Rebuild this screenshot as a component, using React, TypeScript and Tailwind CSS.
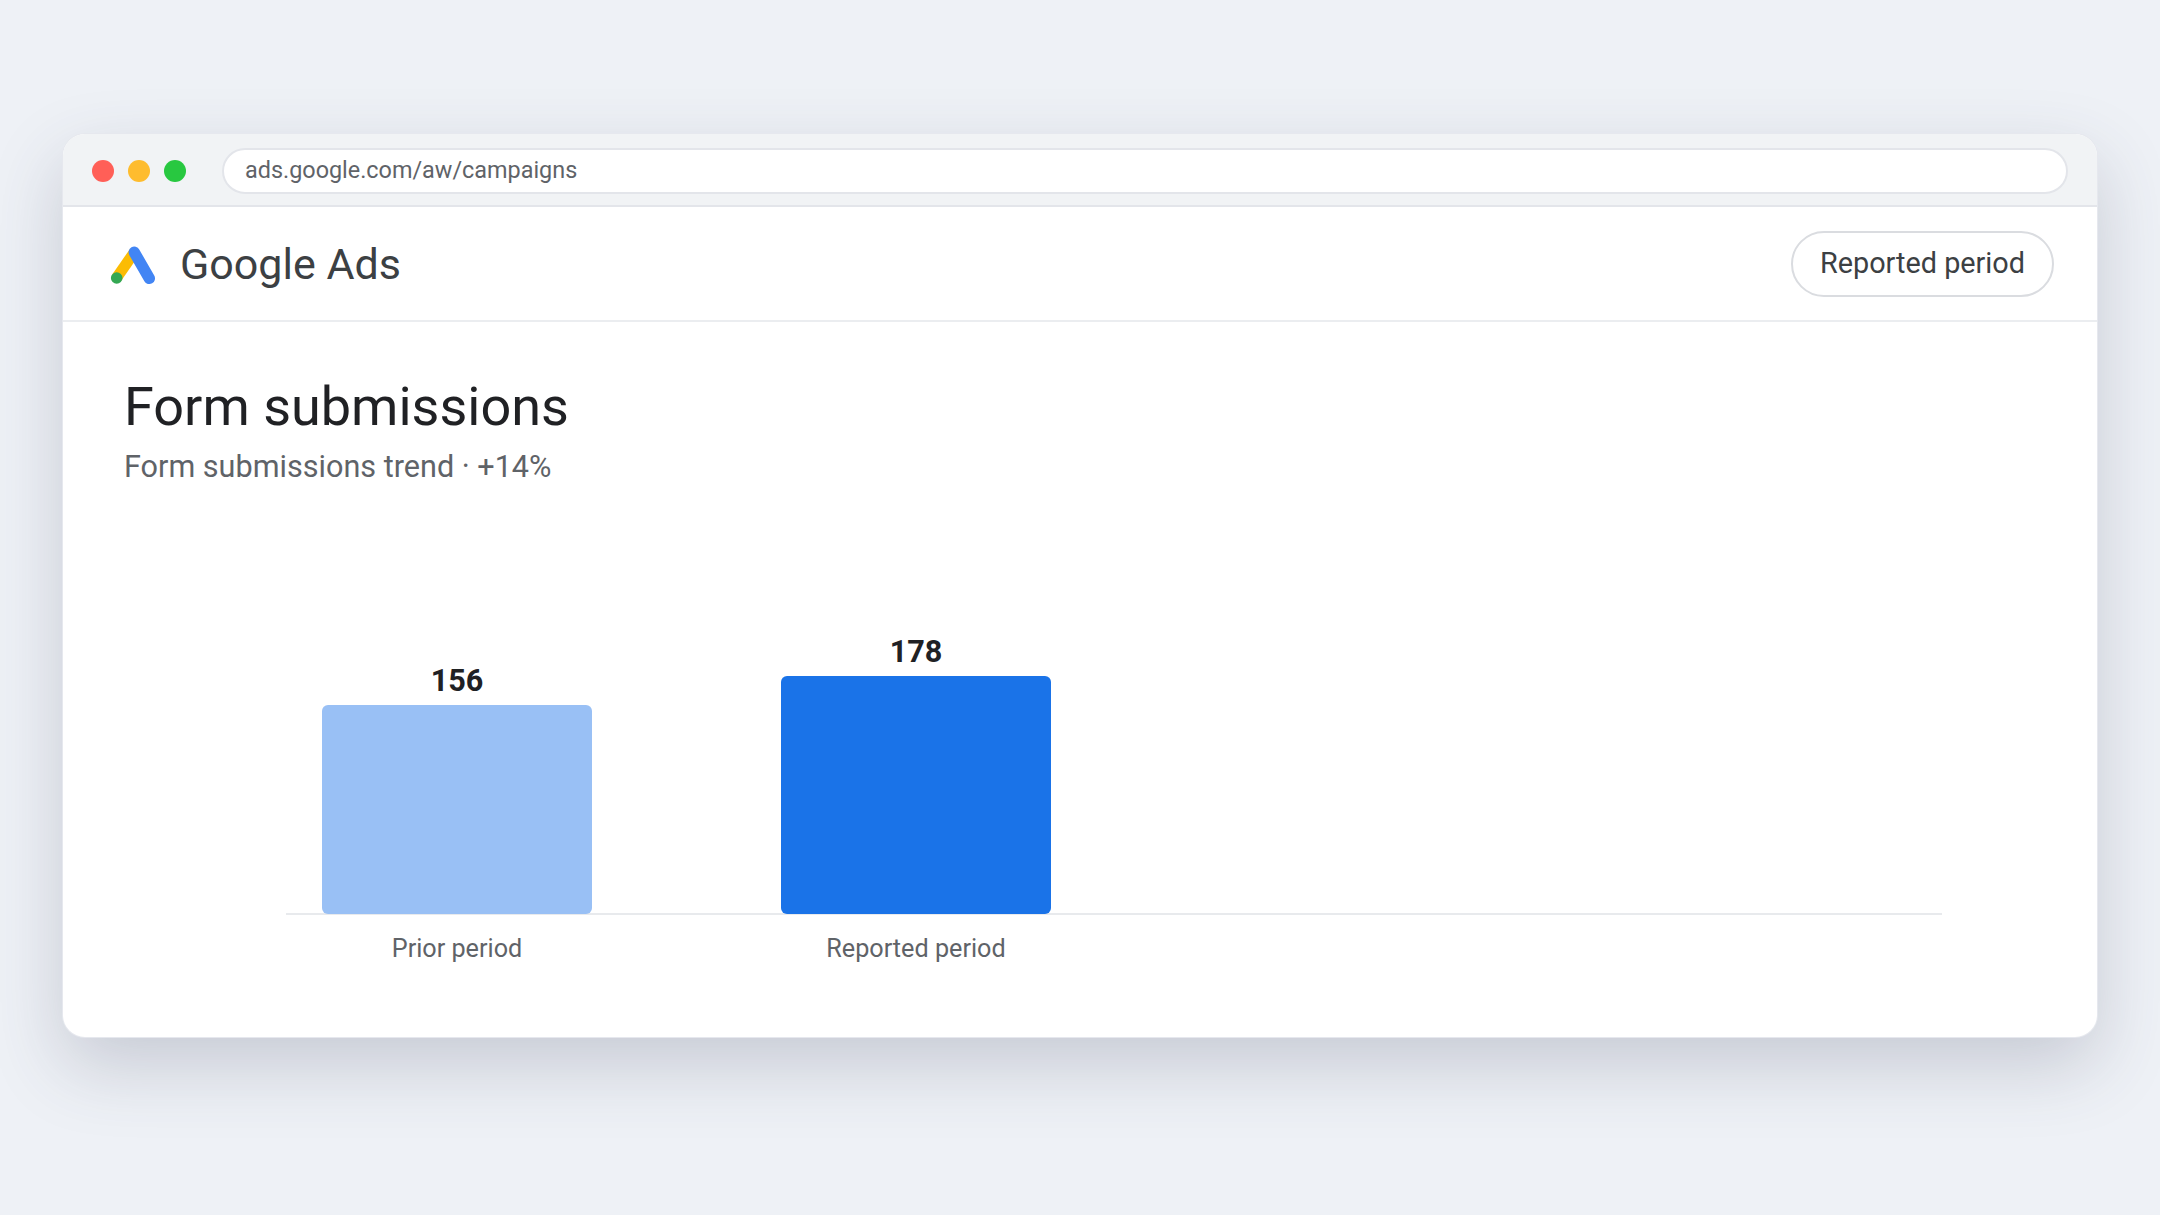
import React from 'react';

const bars = [
  { label: 'Prior period', value: 156, height: 'h-[209px]', color: 'bg-[#99c0f5]' },
  { label: 'Reported period', value: 178, height: 'h-[238px]', color: 'bg-[#1a73e8]' },
];

function AdsLogo() {
  return (
    <svg width="46" height="40" viewBox="0 0 46 40" fill="none">
      <line x1="6.7" y1="32.7" x2="24.3" y2="7.3" stroke="#fbbc04" strokeWidth="11" />
      <line x1="24.3" y1="7.3" x2="39.3" y2="33.4" stroke="#4285f4" strokeWidth="11.4" strokeLinecap="round" />
      <circle cx="6.7" cy="33" r="5.8" fill="#34a853" />
    </svg>
  );
}

export default function App() {
  return (
    <div className="h-screen overflow-hidden bg-[#eef1f6] pt-[134px] font-['Roboto',sans-serif]">
      <div className="mx-auto h-[903px] w-[2034px] overflow-hidden rounded-[22px] bg-white shadow-[0_0_0_1px_#e6e8ee,0_28px_72px_rgba(60,64,90,0.22)]">
        {/* Browser chrome */}
        <div className="flex h-[73px] items-center border-b-2 border-[#e3e5ea] bg-[#f1f3f5] px-[29px] pt-[2px]">
          <div className="flex gap-[14px]">
            <span className="h-[22px] w-[22px] rounded-full bg-[#ff5f57]" />
            <span className="h-[22px] w-[22px] rounded-full bg-[#febc2e]" />
            <span className="h-[22px] w-[22px] rounded-full bg-[#28c840]" />
          </div>
          <div className="ml-[36px] flex h-[46px] flex-1 items-center rounded-full border-2 border-[#e3e5ea] bg-white pl-[21px] text-[23.4px] text-[#5f6368]">
            ads.google.com/aw/campaigns
          </div>
        </div>

        {/* App header */}
        <div className="flex h-[115px] items-center justify-between border-b-2 border-[#ebedf0] pr-[43px] pl-[47px]">
          <div className="mt-[3px] flex items-center gap-[24px]">
            <AdsLogo />
            <span className="-mt-[1px] text-[43px] text-[#3c4043]">Google Ads</span>
          </div>
          <button className="h-[66px] rounded-full border-2 border-[#dadce0] bg-white px-[27px] text-[28.8px] text-[#3c4043]">
            Reported period
          </button>
        </div>

        {/* Content */}
        <div className="pt-[52px] pl-[61px]">
          <h1 className="text-[54px] leading-[66px] text-[#202124]">Form submissions</h1>
          <p className="mt-[8px] text-[30.6px] leading-[38px] text-[#5f6368]">Form submissions trend · +14%</p>

          <div className="mt-[148px] ml-[162px] w-[1656px]">
            <div className="flex items-end gap-[189px] border-b-2 border-[#e8eaed] pl-[36px]">
              {bars.map((bar) => (
                <div key={bar.label} className="-mb-px flex w-[270px] flex-col items-center">
                  <span className="mb-[6px] text-[30.6px] leading-[36px] font-bold text-[#202124]">{bar.value}</span>
                  <div className={`w-full rounded-[6px] ${bar.height} ${bar.color}`} />
                </div>
              ))}
            </div>
            <div className="mt-[18px] flex gap-[189px] pl-[36px]">
              {bars.map((bar) => (
                <span key={bar.label} className="w-[270px] text-center text-[25.2px] leading-[32px] text-[#5f6368]">
                  {bar.label}
                </span>
              ))}
            </div>
          </div>
        </div>
      </div>
    </div>
  );
}
